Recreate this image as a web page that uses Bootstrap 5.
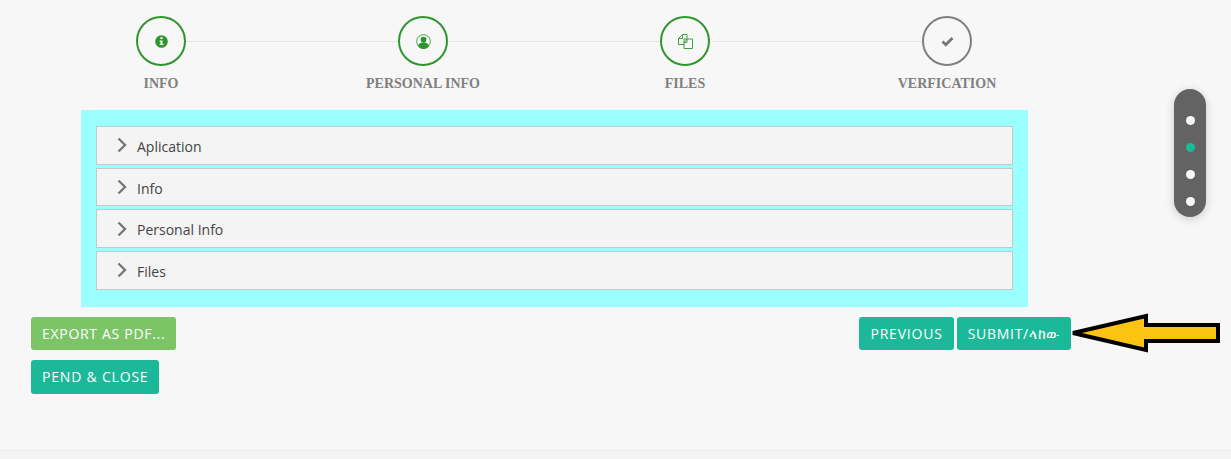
<!DOCTYPE html>
<html lang="en">
<head>
  <meta charset="UTF-8">
  <meta name="viewport" content="width=device-width, initial-scale=1.0">
  <title>Application</title>
  <link rel="stylesheet" href="https://cdn.jsdelivr.net/npm/bootstrap@5.3.5/dist/css/bootstrap.min.css">
  <style>
    body { background: #f4f4f4; font-family: "Open Sans", "DejaVu Sans", sans-serif; height: 459px; overflow: hidden; position: relative; }
    .page-wrap { padding: 16px 153px 0 30px; background: #f7f7f7; border-bottom: 1px solid #ececec; height: 451px; }
    .steps { position: relative; }
    .steps::before { content: ""; position: absolute; top: 25px; left: 131px; right: 131px; height: 1px; background: #e6e6e6; }
    .step { width: 262px; position: relative; }
    .step-circle { width: 50px; height: 50px; border: 2px solid #2f962f; border-radius: 50%; background: #f7f7f7; color: #2f962f; }
    .step-circle.todo { border-color: #808080; color: #777; }
    .step-label { font-family: "Liberation Serif", serif; font-weight: 700; font-size: 14px; line-height: 16px; color: #808080; margin-top: 10px; }
    .accordion-box { background: #99ffff; margin: 18px 50px 0 51px; padding: 16px 15px 17px; }
    .acc-item { height: 38.7px; background: #f4f4f4; border: 1px solid #c4c8c8; padding-left: 20px; gap: 10px; color: #444; font-size: 14px; margin-bottom: 3px; }
    .acc-item:last-child { margin-bottom: 0; }
    .acc-item span { padding-top: 2px; }
    .btn-row { margin: 10px 0 0 1px; width: 1040px; }
    .btn-pair { gap: 3px; }
    .act-btn { color: #fff; font-size: 14px; letter-spacing: .8px; height: 33px; padding: 0 11px; border: 0; border-radius: 3px; background: #1bb899; line-height: 33px; }
    .act-btn:hover { color: #fff; background: #1bb899; }
    .act-btn.pdf { background: #7cc567; letter-spacing: .7px; }
    .act-btn.send { letter-spacing: .7px; }
    .pend { margin: 10px 0 0 1px; height: 34px; }
    .side-dots { position: absolute; left: 1174px; top: 89px; width: 32px; height: 128px; background: #636363; border-radius: 16px; box-shadow: 0 2px 10px rgba(0,0,0,.18); padding-top: 27px; gap: 18px; }
    .side-dots i { width: 9px; height: 9px; border-radius: 50%; background: #f7f7f7; }
    .side-dots i.on { background: #1bb899; }
    .arrow-mark { position: absolute; left: 1070px; top: 312px; }
  </style>
</head>
<body>

  <div class="page-wrap">
    <div class="steps d-flex">
      <div class="step d-flex flex-column align-items-center">
        <div class="step-circle d-flex align-items-center justify-content-center">
          <svg width="13" height="13" viewBox="0 0 12 12"><circle cx="6" cy="6" r="5.8" fill="currentColor"/><rect x="5" y="2" width="2" height="1.8" fill="#f7f7f7"/><path d="M4.200 5h2.800v3.200h.8v1H4.200v-1H5V6h-.8z" fill="#f7f7f7"/></svg>
        </div>
        <div class="step-label">INFO</div>
      </div>
      <div class="step d-flex flex-column align-items-center">
        <div class="step-circle d-flex align-items-center justify-content-center">
          <svg width="15" height="15" viewBox="0 0 14 14"><circle cx="7" cy="7" r="6.4" fill="none" stroke="currentColor" stroke-width=".8"/><circle cx="7" cy="5.200" r="2.700" fill="currentColor"/><path d="M1.800 11c1-2.600 3.200-3.200 5.200-3.200s4.200 .6 5.200 3.200c-1.200 2-3.200 3-5.200 3s-4-1-5.200-3z" fill="currentColor"/></svg>
        </div>
        <div class="step-label">PERSONAL INFO</div>
      </div>
      <div class="step d-flex flex-column align-items-center">
        <div class="step-circle d-flex align-items-center justify-content-center">
          <svg width="15" height="15" viewBox="0 0 15 15" fill="none" stroke="currentColor" stroke-width=".9"><path d="M9 4.500V.5H4.500L.5 4.500v6H6"/><path d="M4.500.5v4H.5"/><path d="M6 5h8.500v9.500H6z"/><path d="M6 8.500L9 5v3.500z"/></svg>
        </div>
        <div class="step-label">FILES</div>
      </div>
      <div class="step d-flex flex-column align-items-center">
        <div class="step-circle todo d-flex align-items-center justify-content-center">
          <svg width="13" height="11" viewBox="0 0 13 11"><path d="M1.500 5.500l3.300 3.300 6.700-6.800" fill="none" stroke="currentColor" stroke-width="2.800"/></svg>
        </div>
        <div class="step-label">VERFICATION</div>
      </div>
    </div>

    <div class="accordion-box">
      <div class="acc-item d-flex align-items-center"><svg width="10" height="16" viewBox="0 0 10 16"><path d="M1.500 1.500L8 8l-6.500 6.500" fill="none" stroke="#777" stroke-width="2.400"/></svg><span>Aplication</span></div>
      <div class="acc-item d-flex align-items-center"><svg width="10" height="16" viewBox="0 0 10 16"><path d="M1.500 1.500L8 8l-6.500 6.500" fill="none" stroke="#777" stroke-width="2.400"/></svg><span>Info</span></div>
      <div class="acc-item d-flex align-items-center"><svg width="10" height="16" viewBox="0 0 10 16"><path d="M1.500 1.500L8 8l-6.500 6.500" fill="none" stroke="#777" stroke-width="2.400"/></svg><span>Personal Info</span></div>
      <div class="acc-item d-flex align-items-center"><svg width="10" height="16" viewBox="0 0 10 16"><path d="M1.500 1.500L8 8l-6.500 6.500" fill="none" stroke="#777" stroke-width="2.400"/></svg><span>Files</span></div>
    </div>

    <div class="btn-row d-flex justify-content-between">
      <button class="btn act-btn pdf">EXPORT AS PDF...</button>
      <div class="btn-pair d-flex">
        <button class="btn act-btn">PREVIOUS</button>
        <button class="btn act-btn send">SUBMIT/ላከው</button>
      </div>
    </div>
    <button class="btn act-btn pend d-block">PEND &amp; CLOSE</button>
  </div>

  <div class="side-dots d-flex flex-column align-items-center">
    <i></i><i class="on"></i><i></i><i></i>
  </div>

  <svg class="arrow-mark" width="152" height="44" viewBox="0 0 152 44">
    <path d="M3 21L76 4v9h72v16H76v9z" fill="#fdc311" stroke="#000" stroke-width="4" stroke-linejoin="miter"/>
  </svg>

  <script src="https://cdn.jsdelivr.net/npm/bootstrap@5.3.5/dist/js/bootstrap.bundle.min.js"></script>
</body>
</html>
